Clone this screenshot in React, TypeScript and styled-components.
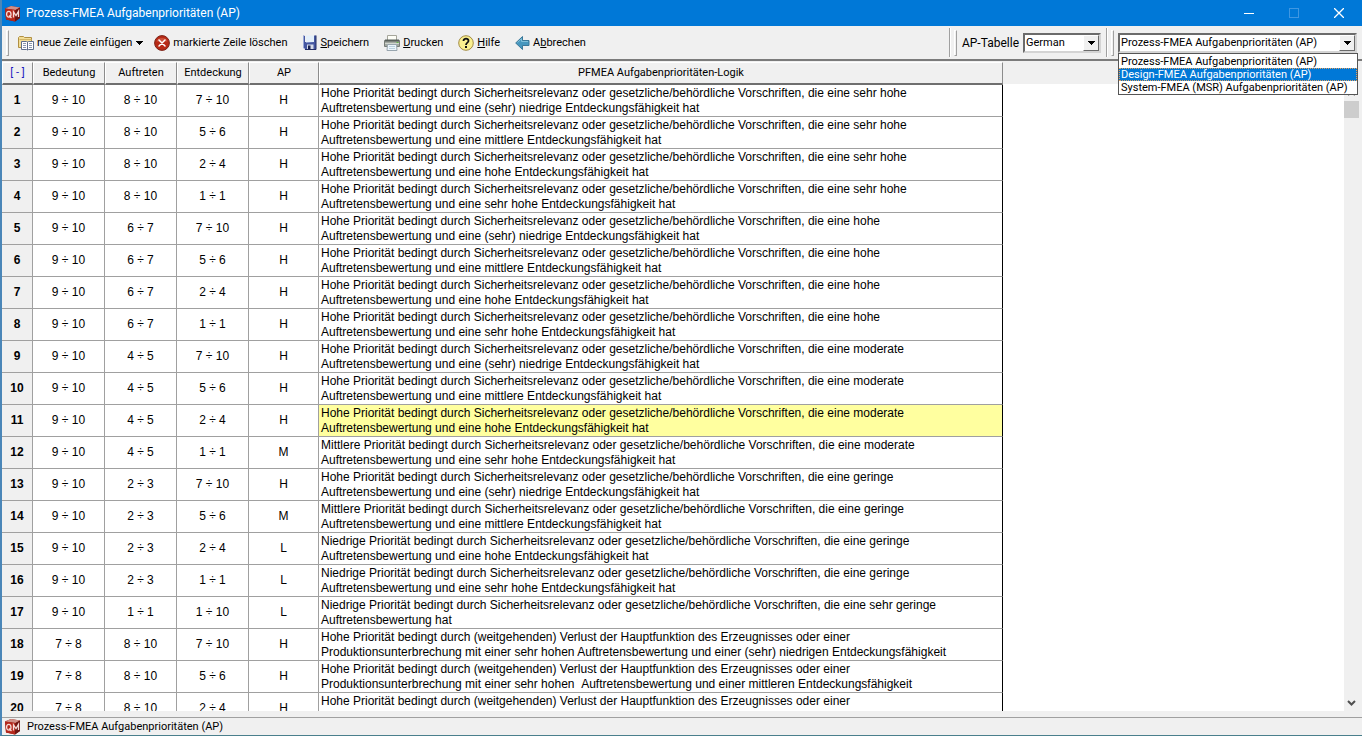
import React from "react";
import styled, { createGlobalStyle, css } from "styled-components";

const GlobalStyle = createGlobalStyle`
  * { box-sizing: border-box; }
  body { margin: 0; background: #f0f0f0; }
  button, select { font: inherit; color: inherit; }
`;

const uiFont = `Roboto, "Liberation Sans", sans-serif`;

const Window = styled.div`
  display: flex;
  flex-direction: column;
  height: 100vh;
  overflow: hidden;
  background: #f0f0f0;
  color: #000;
  font: 11px/14px ${uiFont};
  border-left: 2px solid #4a86b8;
  border-bottom: 1px solid #4a7f8c;
`;

const TitleBar = styled.header`
  display: flex;
  flex: none;
  align-items: center;
  height: 26px;
  padding: 0 1px 0 2px;
  background: #0078d7;
  color: #fff;
`;

const Title = styled.h1`
  flex: 1;
  margin: 0 0 0 5px;
  font: 400 12px/16px ${uiFont};
`;

const CaptionButton = styled.button`
  display: flex;
  align-items: center;
  justify-content: center;
  width: 45px;
  height: 26px;
  padding: 0;
  border: 0;
  background: none;
  color: #fff;
  &:disabled { color: #3f97e2; }
`;

const ToolBar = styled.div`
  display: flex;
  flex: none;
  align-items: center;
  height: 35px;
  padding: 0 5px 0 4px;
  border-bottom: 2px solid #7b7b7b;
`;

const Grip = styled.span`
  flex: none;
  width: 3px;
  height: 26px;
  border: 1px solid #a0a0a0;
  border-left-color: #fff;
  border-top-color: #fff;
`;

const Divider = styled.span`
  flex: none;
  align-self: stretch;
  width: 2px;
  margin: 2px 3px 2px 5px;
  border-left: 1px solid #a0a0a0;
  border-right: 1px solid #fff;
`;

const Tools = styled.div`
  display: flex;
  flex: 1;
  align-items: center;
  gap: 15px;
  padding-left: 9px;
`;

const ToolGroup = styled.div`
  display: flex;
  align-items: center;
  gap: 11px;
`;

const ToolButton = styled.button`
  display: flex;
  align-items: center;
  gap: 3px;
  padding: 0;
  border: 0;
  background: none;
  white-space: nowrap;
  font: 11px/14px ${uiFont};
`;

const FieldLabel = styled.label`
  margin: 0 4px 0 5px;
  font: 12px/16px ${uiFont};
`;

const Combo = styled.div<{ $width: number }>`
  position: relative;
  width: ${(p) => p.$width}px;
  height: 20px;
  margin-left: ${(p) => (p.$width > 100 ? 4 : 0)}px;
  border: 2px solid;
  border-color: #6b6b6b #d4d4d4 #d4d4d4 #6b6b6b;
  background: #fff;
`;

const ComboSelect = styled.select`
  display: block;
  width: 100%;
  height: 16px;
  padding: 0 18px 0 1px;
  border: 0;
  outline: 0;
  appearance: none;
  background: transparent;
`;

const ComboArrow = styled.span`
  position: absolute;
  top: 0;
  right: 0;
  display: flex;
  align-items: center;
  justify-content: center;
  width: 16px;
  height: 16px;
  border: 1px solid;
  border-color: #fff #6b6b6b #6b6b6b #fff;
  background: #f0f0f0;
  pointer-events: none;
`;

const OptionList = styled.ul`
  position: absolute;
  z-index: 2;
  top: 18px;
  left: -2px;
  right: -3px;
  margin: 0;
  padding: 1px 0 0;
  border: 1px solid #555;
  background: #fff;
  list-style: none;
`;

const Option = styled.li<{ $active: boolean }>`
  padding: 0 2px;
  line-height: 13px;
  white-space: nowrap;
  ${(p) =>
    p.$active &&
    css`
      background: #0078d7;
      color: #fff;
      outline: 1px dotted #e0a060;
      outline-offset: -1px;
    `}
`;

const Viewport = styled.main`
  display: flex;
  flex: 1;
  min-height: 0;
  padding-top: 1px;
`;

const Sheet = styled.div`
  flex: 1;
  overflow: hidden;
  background: linear-gradient(#f0f0f0 22px, #fff 22px);
`;

const Grid = styled.table`
  width: 1001px;
  table-layout: fixed;
  border-collapse: separate;
  border-spacing: 0;
`;

const HeadCell = styled.th<{ $corner?: boolean }>`
  height: 23px;
  padding: 0;
  border: 1px solid;
  border-color: #fff #8c8c8c #6f6f6f #fff;
  border-bottom-width: 2px;
  background: #f0f0f0;
  color: ${(p) => (p.$corner ? "#1818c0" : "#000")};
  font: 400 11px/14px ${uiFont};
  white-space: nowrap;
`;

const cell = css`
  height: 32px;
  padding: 0;
  border-right: 1px solid #a0a0a0;
  border-bottom: 1px solid #a0a0a0;
  font: 12px/15px "Liberation Sans", Arial, sans-serif;
  text-align: center;
`;

const RowHead = styled.th`
  ${cell}
  background: #f0f0f0;
  font-weight: 700;
`;

const ValueCell = styled.td`
  ${cell}
`;

const LogicCell = styled.td<{ $marked: boolean }>`
  ${cell}
  padding: 1px 24px 0 2px;
  border-right-color: #000;
  background: ${(p) => (p.$marked ? "#ffff9f" : "#fff")};
  text-align: left;
  vertical-align: top;
`;

const ScrollBar = styled.div`
  display: flex;
  flex: none;
  flex-direction: column;
  justify-content: space-between;
  align-items: flex-start;
  width: 18px;
  padding: 22px 0 0;
`;

const ScrollButton = styled.button`
  display: flex;
  align-items: center;
  justify-content: center;
  width: 15px;
  height: 17px;
  padding: 0;
  border: 0;
  background: none;
`;

const Thumb = styled.div`
  width: 15px;
  height: 17px;
  margin-bottom: auto;
  background: #cdcdcd;
`;

const StatusBar = styled.footer`
  display: flex;
  flex: none;
  align-items: center;
  gap: 6px;
  height: 18px;
  margin-top: 6px;
  padding-left: 2px;
  border-top: 1px solid #a0a0a0;
`;

const Logo = () => (
  <svg width="17" height="17" viewBox="0 0 17 17" aria-hidden="true">
    <path d="M1 3.500 7 1l9 1.500v10.500l-5 3.500L2 14.500z" fill="#8c1a14" />
    <path d="M1 3.500 7 1l9 1.500-4.500 2.500z" fill="#cf9088" />
    <path d="M1 3.500 11.500 5 11 16.500 2 14.500z" fill="#b5281c" />
    <path d="M11.500 5 16 2.500v10.500l-5 3.500z" fill="#6e1512" />
    <ellipse cx="4.800" cy="9.300" rx="2.200" ry="2.900" fill="none" stroke="#f6dcd8" strokeWidth="1.300" />
    <path d="M5 10.500l2.500 2.500M9.500 12.500V6.800l2.500 3.700 2.500-4.200V12" fill="none" stroke="#f6dcd8" strokeWidth="1.300" />
  </svg>
);

const InsertIcon = () => (
  <svg width="16" height="16" viewBox="0 0 16 16" aria-hidden="true">
    <path d="M.5 12.500V2.500l1-1h4l1 1h7v10z" fill="#f3dd95" stroke="#b08f43" />
    <path d="M1.500 4.500h12" stroke="#d2b565" />
    <path d="M3.500 6.500h5l1 .5 1-.5h5v8h-5l-1 .5-1-.5h-5z" fill="#fff" stroke="#5f6f8c" />
    <path d="M9.500 7v8" stroke="#5f6f8c" />
    <path d="M5 8.500h3M5 10.500h3M5 12.500h3M11 8.500h3M11 10.500h3M11 12.500h3" stroke="#8b97ad" />
  </svg>
);

const DeleteIcon = () => (
  <svg width="16" height="16" viewBox="0 0 16 16" aria-hidden="true">
    <circle cx="8" cy="8" r="7.400" fill="#b82a16" stroke="#7d2418" />
    <path d="M2.500 6.500a5.800 5 0 0 1 11 0" fill="#cc523c" />
    <path d="M5 5l6 6M11 5l-6 6" stroke="#fff" strokeWidth="1.500" strokeLinecap="round" />
  </svg>
);

const SaveIcon = () => (
  <svg width="15" height="15" viewBox="0 0 15 15" aria-hidden="true">
    <path d="M1.500.5 3 1v6h9V.5h2v13.500H3L1 12.500z" fill="#4456a0" />
    <path d="M1.500.5v12.500l1.500 1" fill="none" stroke="#9aa8d8" />
    <path d="M4 .5h8V7L4 7.500z" fill="#e4effa" />
    <path d="M14 .5v14H3" fill="none" stroke="#232c62" />
    <path d="M5 9.500h6.500V14H5z" fill="#d5dae8" />
    <path d="M6 10.500h2.500V14H6z" fill="#1a2250" />
  </svg>
);

const PrintIcon = () => (
  <svg width="16" height="16" viewBox="0 0 16 16" aria-hidden="true">
    <path d="M3.500 5V.5h9V5" fill="#fdfdf6" stroke="#a5a59a" />
    <path d="M.5 5.500h15v6H.5z" fill="#a3a8a2" stroke="#777c77" />
    <path d="M1 5.500h14" stroke="#59605c" strokeWidth="2" />
    <path d="M1 8.500h14" stroke="#d0d5ce" />
    <path d="M12.500 7.500h2" stroke="#62b94b" />
    <path d="M3.500 9.500h9l.5 6H3z" fill="#edf5fc" stroke="#98a5ae" />
    <path d="M5 11.500h6M5 13.500h6" stroke="#b9d0df" />
  </svg>
);

const HelpIcon = () => (
  <svg width="16" height="16" viewBox="0 0 16 16" aria-hidden="true">
    <circle cx="8" cy="8" r="7.300" fill="#faf08f" stroke="#a38c45" />
    <path d="M5.500 6C5.500 2.800 10.700 3 10.500 6 10.400 7.600 8 7.700 8 10" fill="none" stroke="#111" strokeWidth="1.800" />
    <path d="M7 11h2v2H7z" fill="#111" />
  </svg>
);

const BackIcon = () => (
  <svg width="15" height="16" viewBox="0 0 15 16" aria-hidden="true">
    <path d="M.7 8 7.500 1.500v4h6.500v5H7.500v4z" fill="#4797be" stroke="#3a7899" />
    <path d="M2.500 7.500 6.500 3.700V6.500h6.500" fill="none" stroke="#7fc0da" />
  </svg>
);

const DownTriangle = () => (
  <svg width="8" height="4" viewBox="0 0 8 4" shapeRendering="crispEdges" aria-hidden="true">
    <path d="M0 0h8L4 4z" fill="#000" />
  </svg>
);

const Chevron = ({ up = false }: { up?: boolean }) => (
  <svg width="9" height="6" viewBox="0 0 9 6" aria-hidden="true">
    <path d={up ? "M1 5l3.500-3.500L8 5" : "M1 1l3.500 3.500L8 1"} fill="none" stroke="#505050" strokeWidth="2" />
  </svg>
);

const tables = [
  "Prozess-FMEA Aufgabenprioritäten (AP)",
  "Design-FMEA Aufgabenprioritäten (AP)",
  "System-FMEA (MSR) Aufgabenprioritäten (AP)",
];

const columns = [
  { label: "[ - ]", width: 31 },
  { label: "Bedeutung", width: 72 },
  { label: "Auftreten", width: 72 },
  { label: "Entdeckung", width: 72 },
  { label: "AP", width: 70 },
  { label: "PFMEA Aufgabenprioritäten-Logik", width: 684 },
];

const safety = (level: string, occurrence: string, detection: string) =>
  `${level} Priorität bedingt durch Sicherheitsrelevanz oder gesetzliche/behördliche Vorschriften, die eine ${occurrence} Auftretensbewertung ${detection}hat`;

const low = "und eine (sehr) niedrige Entdeckungsfähigkeit ";
const medium = "und eine mittlere Entdeckungsfähigkeit ";
const high = "und eine hohe Entdeckungsfähigkeit ";
const veryHigh = "und eine sehr hohe Entdeckungsfähigkeit ";
const loss = "Hohe Priorität bedingt durch (weitgehenden) Verlust der Hauptfunktion des Erzeugnisses oder einer";

const rows: [string, string, string, string, string][] = [
  ["9 ÷ 10", "8 ÷ 10", "7 ÷ 10", "H", safety("Hohe", "sehr hohe", low)],
  ["9 ÷ 10", "8 ÷ 10", "5 ÷ 6", "H", safety("Hohe", "sehr hohe", medium)],
  ["9 ÷ 10", "8 ÷ 10", "2 ÷ 4", "H", safety("Hohe", "sehr hohe", high)],
  ["9 ÷ 10", "8 ÷ 10", "1 ÷ 1", "H", safety("Hohe", "sehr hohe", veryHigh)],
  ["9 ÷ 10", "6 ÷ 7", "7 ÷ 10", "H", safety("Hohe", "hohe", low)],
  ["9 ÷ 10", "6 ÷ 7", "5 ÷ 6", "H", safety("Hohe", "hohe", medium)],
  ["9 ÷ 10", "6 ÷ 7", "2 ÷ 4", "H", safety("Hohe", "hohe", high)],
  ["9 ÷ 10", "6 ÷ 7", "1 ÷ 1", "H", safety("Hohe", "hohe", veryHigh)],
  ["9 ÷ 10", "4 ÷ 5", "7 ÷ 10", "H", safety("Hohe", "moderate", low)],
  ["9 ÷ 10", "4 ÷ 5", "5 ÷ 6", "H", safety("Hohe", "moderate", medium)],
  ["9 ÷ 10", "4 ÷ 5", "2 ÷ 4", "H", safety("Hohe", "moderate", high)],
  ["9 ÷ 10", "4 ÷ 5", "1 ÷ 1", "M", safety("Mittlere", "moderate", veryHigh)],
  ["9 ÷ 10", "2 ÷ 3", "7 ÷ 10", "H", safety("Hohe", "geringe", low)],
  ["9 ÷ 10", "2 ÷ 3", "5 ÷ 6", "M", safety("Mittlere", "geringe", medium)],
  ["9 ÷ 10", "2 ÷ 3", "2 ÷ 4", "L", safety("Niedrige", "geringe", high)],
  ["9 ÷ 10", "2 ÷ 3", "1 ÷ 1", "L", safety("Niedrige", "geringe", veryHigh)],
  ["9 ÷ 10", "1 ÷ 1", "1 ÷ 10", "L", safety("Niedrige", "sehr geringe", "")],
  ["7 ÷ 8", "8 ÷ 10", "7 ÷ 10", "H", `${loss} Produktionsunterbrechung mit einer sehr hohen Auftretensbewertung und einer (sehr) niedrigen Entdeckungsfähigkeit`],
  ["7 ÷ 8", "8 ÷ 10", "5 ÷ 6", "H", `${loss} Produktionsunterbrechung mit einer sehr hohen \u00a0Auftretensbewertung und einer mittleren Entdeckungsfähigkeit`],
  ["7 ÷ 8", "8 ÷ 10", "2 ÷ 4", "H", loss],
];

const markedRow = 11;

export default function App() {
  return (
    <Window>
      <GlobalStyle />
      <TitleBar>
        <Logo />
        <Title>{tables[0]}</Title>
        <CaptionButton aria-label="Minimieren">
          <svg width="10" height="10" shapeRendering="crispEdges"><path d="M0 5.500h10" stroke="currentColor" /></svg>
        </CaptionButton>
        <CaptionButton aria-label="Maximieren" disabled>
          <svg width="10" height="10" shapeRendering="crispEdges"><path d="M.5.5h9v9h-9z" fill="none" stroke="currentColor" /></svg>
        </CaptionButton>
        <CaptionButton aria-label="Schließen">
          <svg width="10" height="10"><path d="M0 0l10 10M10 0L0 10" stroke="currentColor" strokeWidth="1.300" /></svg>
        </CaptionButton>
      </TitleBar>

      <ToolBar>
        <Grip />
        <Tools>
          <ToolGroup>
            <ToolButton>
              <InsertIcon />
              <span>neue Zeile einfügen</span>
              <DownTriangle />
            </ToolButton>
            <ToolButton>
              <DeleteIcon />
              <span>markierte Zeile löschen</span>
            </ToolButton>
          </ToolGroup>
          <ToolButton><SaveIcon /><span><u>S</u>peichern</span></ToolButton>
          <ToolButton><PrintIcon /><span><u>D</u>rucken</span></ToolButton>
          <ToolButton><HelpIcon /><span><u>H</u>ilfe</span></ToolButton>
          <ToolButton><BackIcon /><span>A<u>b</u>brechen</span></ToolButton>
        </Tools>
        <Divider />
        <Grip />
        <FieldLabel htmlFor="language">AP-Tabelle</FieldLabel>
        <Combo $width={78}>
          <ComboSelect id="language" defaultValue="German">
            <option>German</option>
          </ComboSelect>
          <ComboArrow><DownTriangle /></ComboArrow>
        </Combo>
        <Divider />
        <Grip />
        <Combo $width={239}>
          <ComboSelect aria-label="AP-Logik" defaultValue={tables[0]}>
            {tables.map((name) => <option key={name}>{name}</option>)}
          </ComboSelect>
          <ComboArrow><DownTriangle /></ComboArrow>
          <OptionList role="listbox" aria-label="AP-Logik">
            {tables.map((name, i) => (
              <Option key={name} role="option" aria-selected={i === 1} $active={i === 1}>{name}</Option>
            ))}
          </OptionList>
        </Combo>
      </ToolBar>

      <Viewport>
        <Sheet>
          <Grid>
            <colgroup>
              {columns.map((c) => <col key={c.label} width={c.width} />)}
            </colgroup>
            <thead>
              <tr>
                {columns.map((c, i) => <HeadCell key={c.label} scope="col" $corner={i === 0}>{c.label}</HeadCell>)}
              </tr>
            </thead>
            <tbody>
              {rows.map(([severity, occurrence, detection, priority, logic], i) => (
                <tr key={i}>
                  <RowHead scope="row">{i + 1}</RowHead>
                  <ValueCell>{severity}</ValueCell>
                  <ValueCell>{occurrence}</ValueCell>
                  <ValueCell>{detection}</ValueCell>
                  <ValueCell>{priority}</ValueCell>
                  <LogicCell $marked={i + 1 === markedRow}>{logic}</LogicCell>
                </tr>
              ))}
            </tbody>
          </Grid>
        </Sheet>
        <ScrollBar>
          <ScrollButton aria-label="Nach oben"><Chevron up /></ScrollButton>
          <Thumb />
          <ScrollButton aria-label="Nach unten"><Chevron /></ScrollButton>
        </ScrollBar>
      </Viewport>

      <StatusBar>
        <Logo />
        <span>{tables[0]}</span>
      </StatusBar>
    </Window>
  );
}
